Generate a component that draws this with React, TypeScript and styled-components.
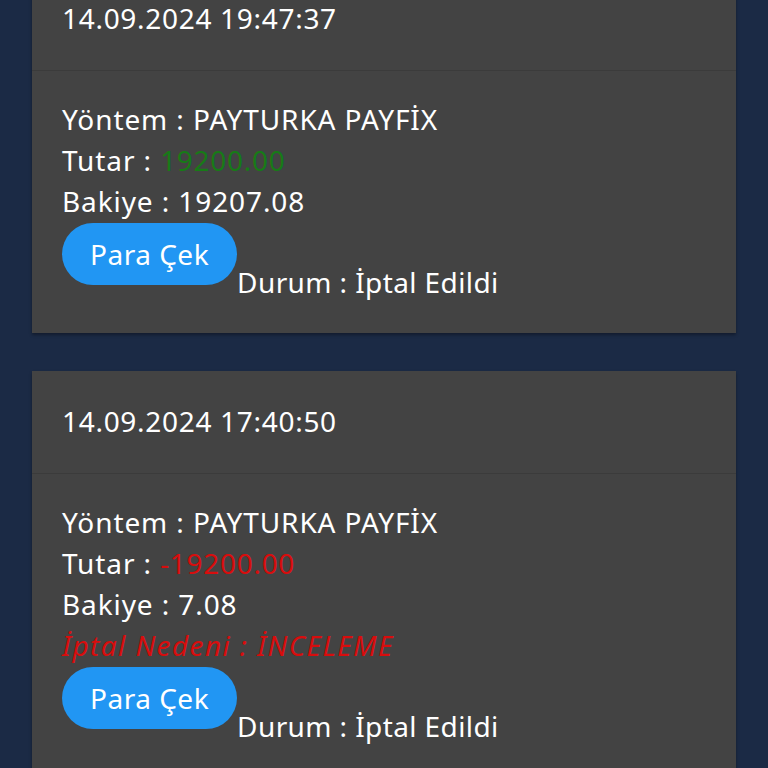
import styled, { createGlobalStyle } from "styled-components";

const GlobalStyle = createGlobalStyle`
  html, body {
    margin: 0;
    padding: 0;
    background: #1b2a45;
  }
  body {
    font-family: "Noto Sans", Lato, sans-serif;
  }
`;

type Tx = {
  date: string;
  method: string;
  amount: string;
  positive: boolean;
  balance: string;
  reason?: string;
  status: string;
};

const Items: Tx[] = [
  {
    date: "14.09.2024 19:47:37",
    method: "PAYTURKA PAYFİX",
    amount: "19200.00",
    positive: true,
    balance: "19207.08",
    status: "İptal Edildi",
  },
  {
    date: "14.09.2024 17:40:50",
    method: "PAYTURKA PAYFİX",
    amount: "-19200.00",
    positive: false,
    balance: "7.08",
    reason: "İNCELEME",
    status: "İptal Edildi",
  },
];

const App = () => {
  return (
    <>
      <GlobalStyle />
      <Page>
        <List>
          {Items.map((el, idx) => (
            <Card key={idx}>
              <Header>{el.date}</Header>
              <Body>
                <Line>Yöntem : {el.method}</Line>
                <Line>
                  Tutar : <Amount $positive={el.positive}>{el.amount}</Amount>
                </Line>
                <Line>Bakiye : {el.balance}</Line>
                {el.reason && <Reason>İptal Nedeni : {el.reason}</Reason>}
                <Actions>
                  <Button>Para Çek</Button>
                  <Status>Durum : {el.status}</Status>
                </Actions>
              </Body>
            </Card>
          ))}
        </List>
      </Page>
    </>
  );
};

export default App;

const Page = styled.div`
  width: 768px;
  height: 768px;
  overflow: hidden;
  background: #1b2a45;
`;

// list is scrolled, first card header partly hidden
const List = styled.div`
  display: flex;
  flex-direction: column;
  gap: 38px;
  padding: 0 32px;
  margin-top: -32px;
`;

const Card = styled.div`
  background: #434343;
  box-shadow: 0 2px 3px rgba(0, 0, 0, 0.35);
  color: #fff;
`;

const Header = styled.div`
  padding: 30px 30px 31px;
  font-size: 28px;
  line-height: 41px;
  letter-spacing: 0.7px;
  border-bottom: 1px solid #3b3b3b;
`;

const Body = styled.div`
  padding: 28px 30px 30px;
  display: flex;
  flex-direction: column;
`;

const Line = styled.div`
  font-size: 28px;
  line-height: 41px;
  letter-spacing: 0.9px;
`;

const Amount = styled.span<{ $positive: boolean }>`
  color: ${(p) => (p.$positive ? "#177a17" : "#d80d0d")};
  letter-spacing: 0.7px;
`;

const Reason = styled.div`
  font-size: 28px;
  line-height: 41px;
  letter-spacing: 1.4px;
  font-style: italic;
  color: #d80d0d;
`;

const Actions = styled.div`
  display: flex;
  align-items: flex-start;
`;

const Button = styled.button`
  height: 62px;
  padding: 0 28px;
  border: none;
  border-radius: 31px;
  background: #2196f3;
  color: #fff;
  font-family: "Noto Sans", Lato, sans-serif;
  font-size: 28px;
  letter-spacing: 0.5px;
  margin-top: 1px;
`;

const Status = styled.div`
  font-size: 28px;
  line-height: 41px;
  letter-spacing: 0.4px;
  margin-top: 40px;
`;
